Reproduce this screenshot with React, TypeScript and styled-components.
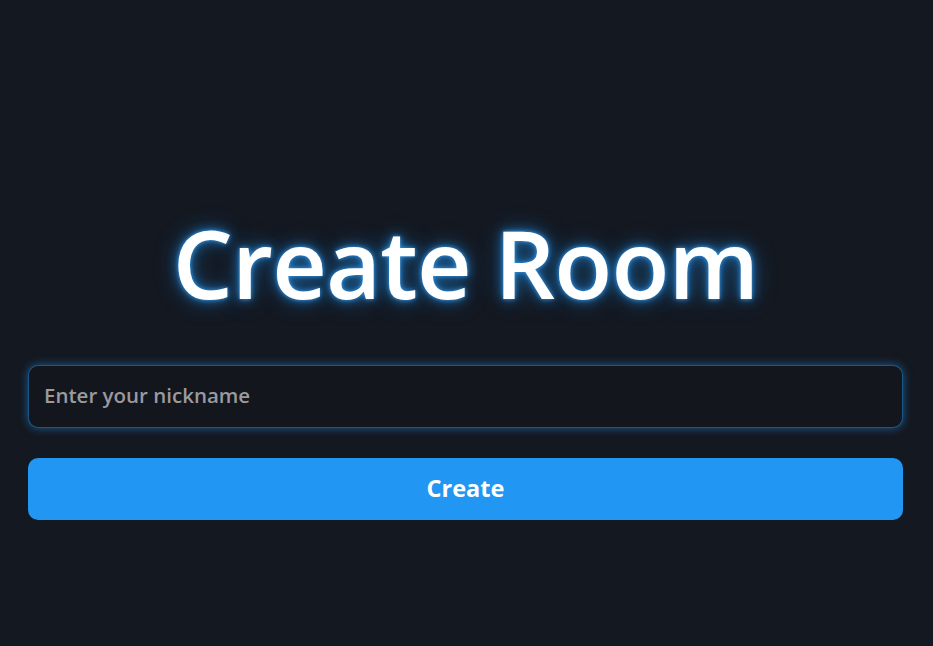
import React from "react";
import styled, { createGlobalStyle } from "styled-components";

const Global = createGlobalStyle`
  html, body { margin: 0; padding: 0; background: #141820; }
  body { font-family: "Open Sans", "Noto Sans", sans-serif; }
  * { box-sizing: border-box; }
`;

const Page = styled.main`
  min-height: 646px;
  background: #141820;
  display: flex;
  justify-content: flex-start;
  padding: 207px 0 0 28px;
`;

const Panel = styled.section`
  width: 875px;
  display: flex;
  flex-direction: column;
`;

const Title = styled.h1`
  margin: 0 0 47px;
  text-align: center;
  color: #ffffff;
  font-family: "Open Sans", sans-serif;
  font-weight: 600;
  font-size: 95px;
  line-height: 111px;
  letter-spacing: -0.9px;
  text-shadow: 0 0 4px rgba(60, 160, 245, 0.9), 0 0 12px rgba(33, 150, 243, 0.7),
    0 0 24px rgba(33, 150, 243, 0.45);
`;

const Input = styled.input`
  height: 63px;
  width: 100%;
  padding: 0 15px 4px;
  border-radius: 10px;
  border: 1px solid rgba(33, 150, 243, 0.5);
  background: #13161d;
  color: #fff;
  font-family: "Open Sans", sans-serif;
  font-weight: 600;
  font-size: 20.5px;
  outline: none;
  box-shadow: 0 0 10px rgba(33, 150, 243, 0.55);
  &::placeholder { color: #9a9a9f; }
`;

const Button = styled.button`
  margin-top: 30px;
  height: 62px;
  width: 100%;
  border: none;
  border-radius: 10px;
  background: #2196f3;
  color: #ffffff;
  font-family: "Open Sans", sans-serif;
  font-weight: 700;
  font-size: 23.5px;
  padding-bottom: 3px;
  cursor: pointer;
`;

export default function App() {
  return (
    <>
      <Global />
      <Page>
        <Panel>
          <Title>Create Room</Title>
          <Input placeholder="Enter your nickname" />
          <Button>Create</Button>
        </Panel>
      </Page>
    </>
  );
}
